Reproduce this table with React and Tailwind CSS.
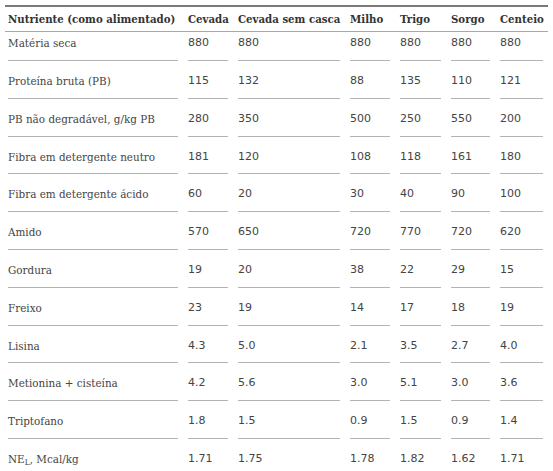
import React from "react";

const headers = ["Nutriente (como alimentado)", "Cevada", "Cevada sem casca", "Milho", "Trigo", "Sorgo", "Centeio"];

const rows = [
  ["Matéria seca", "880", "880", "880", "880", "880", "880"],
  ["Proteína bruta (PB)", "115", "132", "88", "135", "110", "121"],
  ["PB não degradável, g/kg PB", "280", "350", "500", "250", "550", "200"],
  ["Fibra em detergente neutro", "181", "120", "108", "118", "161", "180"],
  ["Fibra em detergente ácido", "60", "20", "30", "40", "90", "100"],
  ["Amido", "570", "650", "720", "770", "720", "620"],
  ["Gordura", "19", "20", "38", "22", "29", "15"],
  ["Freixo", "23", "19", "14", "17", "18", "19"],
  ["Lisina", "4.3", "5.0", "2.1", "3.5", "2.7", "4.0"],
  ["Metionina + cisteína", "4.2", "5.6", "3.0", "5.1", "3.0", "3.6"],
  ["Triptofano", "1.8", "1.5", "0.9", "1.5", "0.9", "1.4"],
  ["NEL", "1.71", "1.75", "1.78", "1.82", "1.62", "1.71"],
];

const grid = "grid grid-cols-[170px_40px_102px_40px_41px_39px_43px] gap-x-[10px] pl-[3px]";

export default function App() {
  return (
    <div className="w-[553px] h-[471px] bg-white overflow-hidden pt-[5px]">
      <div className="ml-[5px] w-[543px]">
        <div className={`${grid} border-t-2 border-b border-t-[#7a7a7a] border-b-[#a8a8a8] h-[27px] items-center`}>
          {headers.map((h, i) => (
            <div key={i} className="whitespace-nowrap font-bold text-[10.2px] text-[#333] leading-none" style={{ fontFamily: '"DejaVu Serif", serif' }}>
              {h}
            </div>
          ))}
        </div>
        {rows.map((r, ri) => (
          <div key={ri} className={`${grid} ${ri === 0 ? "h-[29px]" : "h-[37.8px]"}`}>
            {r.map((c, ci) => (
              <div
                key={ci}
                className={`${ri === 0 ? "pt-[4px]" : "pt-[13px]"} whitespace-nowrap leading-[14px] text-[#444] ${ci === 0 ? "text-[10.4px]" : "text-[11px]"} ${ri < rows.length - 1 ? "border-b border-[#b3b3b3]" : ""}`}
                style={{ fontFamily: ci === 0 ? '"DejaVu Serif", serif' : '"DejaVu Sans", sans-serif' }}
              >
                {ci === 0 && c === "NEL" ? (
                  <span>
                    NE<sub className="text-[7.5px]">L</sub>, Mcal/kg
                  </span>
                ) : (
                  c
                )}
              </div>
            ))}
          </div>
        ))}
      </div>
    </div>
  );
}
